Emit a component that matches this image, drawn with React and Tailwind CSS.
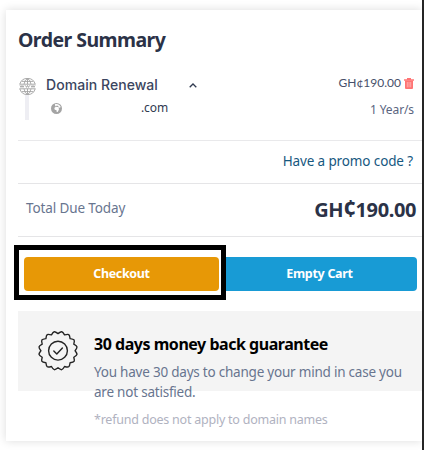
import { FaEarthAfrica } from 'react-icons/fa6'

// closed outline of the guarantee seal: sharp notches with rounded teeth between them
const seal = (() => {
  const n = 16
  const pt = (r, a) => `${(21 + r * Math.cos(a)).toFixed(2)} ${(20.7 + r * Math.sin(a)).toFixed(2)}`
  let d = `M${pt(17.1, -Math.PI / 2)}`
  for (let i = 0; i < n; i++) {
    const a = (2 * Math.PI * i) / n - Math.PI / 2
    const step = (2 * Math.PI) / n
    d += `C${pt(20.2, a + step * 0.45)} ${pt(20.2, a + step * 0.55)} ${pt(17.1, a + step)}`
  }
  return d + 'Z'
})()

function WwwGlobe() {
  return (
    <svg viewBox="0 0 17 17" className="h-[17px] w-[17px]" fill="none" stroke="#a3a3a3" strokeWidth="0.9">
      <path d="M.8 6.2a8 8 0 0 1 15.4 0M.8 10.8a8 8 0 0 0 15.4 0M8.5.5v5.7M8.5 10.8v5.7M5 6.2Q5.6 2 8.5.5Q11.4 2 12 6.2M5 10.8q.6 4.2 3.5 5.7q2.9-1.5 3.5-5.7M2.6 3.4h11.8M2.6 13.6h11.8M.5 6.2h16M.5 10.8h16" />
      <path d="M1 7.4l1 2 1-2 1 2 1-2M6.5 7.4l1 2 1-2 1 2 1-2M12 7.4l1 2 1-2 1 2 1-2" />
    </svg>
  )
}

function Trash() {
  return (
    <svg viewBox="0 0 10 11" className="h-[11px] w-[10px]" fill="#ff7474">
      <path d="M3 0h4v1.3h3v1.5H0V1.3h3z" />
      <path d="M1 2.4h8V10q0 1-1 1H2q-1 0-1-1z" />
      <path d="M3.3 4v5.3M5 4v5.3M6.7 4v5.3" stroke="#ffc4c4" strokeWidth="0.7" />
    </svg>
  )
}

export default function App() {
  return (
    <div className="flex h-[450px] w-[424px] overflow-hidden bg-white font-['Noto_Sans',sans-serif]">
      <div className="w-[422px] overflow-hidden pt-[10px] pl-[6px]">
        <main className="h-[431px] bg-white pl-3 shadow-[0_0_9px_rgba(0,0,0,0.14)]">
          <h1 className="h-[66px] pt-[15px] text-[19.5px] leading-[30px] font-bold tracking-[-0.55px] whitespace-nowrap text-[#2b3247]">Order Summary</h1>

          <section className="flex h-[65px] border-b border-[#e9e9eb]">
            <div className="flex w-7 flex-col items-start pt-[2px] pl-[1px]">
              <WwwGlobe />
              <div className="ml-[6px] h-[25px] w-1 bg-[#eeeef3]" />
            </div>
            <div className="w-[180px]">
              <div className="flex h-[18px] items-center justify-between">
                <h2 className="-mt-[2px] font-['Inter',sans-serif] text-[14px] font-medium tracking-[0.05px] whitespace-nowrap text-[#3b4560]">Domain Renewal</h2>
                <svg viewBox="0 0 8 5" className="mr-[29px] h-[5px] w-2" fill="none" stroke="#303a50" strokeWidth="1.3">
                  <path d="M.7 4.3L4 1l3.3 3.3" />
                </svg>
              </div>
              <div className="flex h-[28px] items-center pl-[5px]">
                <FaEarthAfrica className="size-[11px] text-[#a4a4a4]" />
                <span className="ml-[79px] text-[12px] tracking-[-0.1px] text-[#303a50]">.com</span>
              </div>
            </div>
            <div className="flex flex-1 flex-col items-end pr-2">
              <div className="flex h-[14px] items-center gap-[3px] font-['Lato',sans-serif] text-[12px] whitespace-nowrap text-[#46506a]">
                GH¢190.00 <Trash />
              </div>
              <p className="mt-[10px] text-[12px] leading-5 tracking-[-0.1px] text-[#5a657f]">1 Year/s</p>
            </div>
          </section>

          <section className="flex h-[43px] items-center justify-end border-b border-[#e5e5e7] pr-[9px]">
            <a className="-mt-[1px] text-[13.5px] tracking-[-0.12px] whitespace-nowrap text-[#17587f]">Have a promo code ?</a>
          </section>

          <section className="flex h-[53px] items-center justify-between border-b border-[#e5e5e7] pr-[6px] pl-2">
            <span className="-mt-[3px] text-[13.5px] tracking-[-0.12px] text-[#68758f]">Total Due Today</span>
            <strong className="text-[20px] leading-[30px] font-bold tracking-[-0.4px] text-[#2b3247]">
              GH<span className="text-[23px] leading-none tracking-[-0.8px]">¢</span>190.00
            </strong>
          </section>

          <section className="flex h-[74px] pt-2">
            <div className="relative z-10 -ml-1 h-[55px] w-[212px] shrink-0 border-[5px] border-black bg-white pt-[7px] pr-[2px] pl-[5px]">
              <button className="block h-[34px] w-full rounded-[4px] bg-[#e79806] text-[12.5px] font-bold tracking-[-0.35px] text-white">Checkout</button>
            </div>
            <button className="mt-3 -ml-2 h-[34px] w-[199px] shrink-0 rounded-[4px] bg-[#189bd5] pl-1 text-[12.5px] font-bold tracking-[-0.3px] text-white">Empty Cart</button>
          </section>

          <section className="flex h-20 bg-[#f4f4f4]">
            <svg viewBox="0 0 41 41" className="mt-[19px] ml-[19px] h-[41px] w-[41px] shrink-0" fill="none" stroke="#242424" strokeWidth="1.4" strokeLinejoin="round" strokeLinecap="round">
              <path d={seal} />
              <circle cx="21" cy="20.7" r="9.4" />
              <path d="M16.8 21l3 3 5.6-6" />
            </svg>
            <div className="ml-4 whitespace-nowrap">
              <h3 className="pt-[21px] text-[16px] leading-6 font-bold tracking-[-0.47px] text-black">30 days money back guarantee</h3>
              <p className="mt-[6px] text-[13.5px] leading-5 tracking-[-0.22px] text-[#68758f]">You have 30 days to change your mind in case you<br />are not satisfied.</p>
              <p className="mt-[8px] text-[12.5px] leading-5 tracking-[-0.23px] text-[#b0b2bf]">*refund does not apply to domain names</p>
            </div>
          </section>
        </main>
      </div>
      <div className="w-[2px] bg-[#252525]" />
    </div>
  )
}
